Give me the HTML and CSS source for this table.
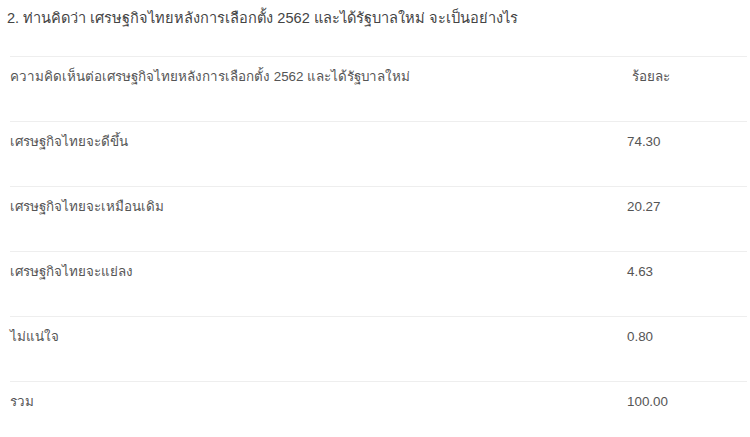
FILE: index.html
```html
<!DOCTYPE html>
<html lang="th">
<head>
    <meta charset="UTF-8">
    <meta name="viewport" content="width=device-width, initial-scale=1.0">
    <title>ผลสำรวจเศรษฐกิจไทย</title>
    <link rel="stylesheet" href="styles.css">
</head>
<body>
    <div class="container">
        <h2 class="question">2. ท่านคิดว่า เศรษฐกิจไทยหลังการเลือกตั้ง 2562 และได้รัฐบาลใหม่ จะเป็นอย่างไร</h2>
        <table class="poll">
            <thead>
                <tr>
                    <th>ความคิดเห็นต่อเศรษฐกิจไทยหลังการเลือกตั้ง 2562 และได้รัฐบาลใหม่</th>
                    <th class="pct">ร้อยละ</th>
                </tr>
            </thead>
            <tbody>
                <tr>
                    <td>เศรษฐกิจไทยจะดีขึ้น</td>
                    <td class="num">74.30</td>
                </tr>
                <tr>
                    <td>เศรษฐกิจไทยจะเหมือนเดิม</td>
                    <td class="num">20.27</td>
                </tr>
                <tr>
                    <td>เศรษฐกิจไทยจะแย่ลง</td>
                    <td class="num">4.63</td>
                </tr>
                <tr>
                    <td>ไม่แน่ใจ</td>
                    <td class="num">0.80</td>
                </tr>
                <tr>
                    <td>รวม</td>
                    <td class="num">100.00</td>
                </tr>
            </tbody>
        </table>
    </div>
</body>
</html>
```

FILE: styles.css
```css
body {
    margin: 0;
    background-color: #fff;
    font-family: "Liberation Sans", Arial, sans-serif;
    color: #555;
}
.container {
    padding: 8px 5px 0 7px;
}
.question {
    margin: 0;
    font-size: 14.6px;
    font-weight: normal;
    line-height: 20px;
    color: #444;
}
.poll {
    width: 737px;
    margin: 28px 0 0 3px;
    border-collapse: collapse;
    font-size: 13.4px;
}
.poll th,
.poll td {
    border-top: 1px solid #eee;
    padding: 11px 0 0 0;
    height: 53px;
    text-align: left;
    vertical-align: top;
    font-weight: normal;
    line-height: 18px;
}
.poll .pct {
    width: 120px;
    padding-left: 5px;
    box-sizing: border-box;
}
.poll .num {
    width: 120px;
}
```
